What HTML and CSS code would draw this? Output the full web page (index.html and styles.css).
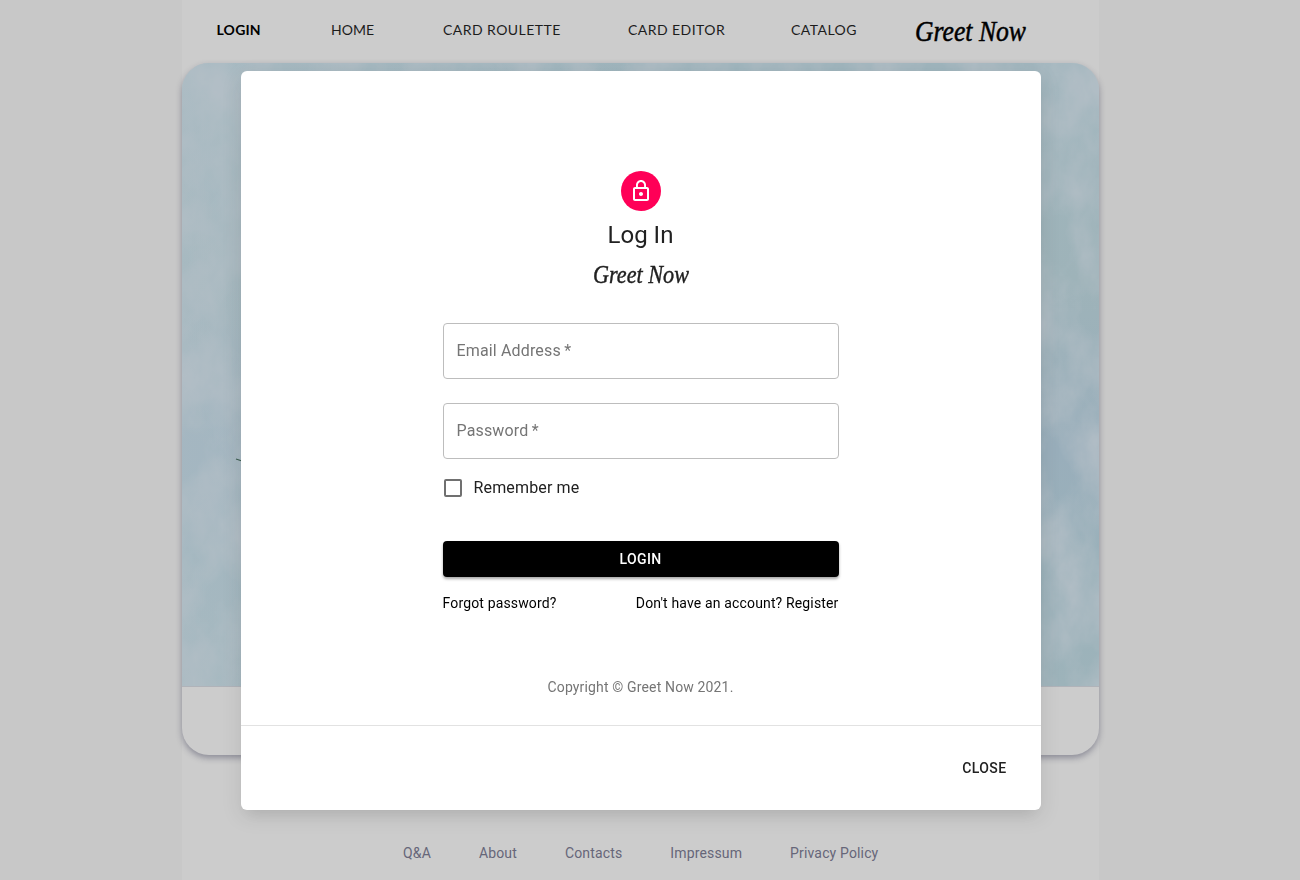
FILE: index.html
```html
<!DOCTYPE html>
<html lang="en">
<head>
<meta charset="utf-8">
<title>Greet Now</title>
<link rel="stylesheet" href="styles.css">
</head>
<body>
<div class="page">
  <nav class="nav">
    <a class="active">LOGIN</a><a class="home">HOME</a><a>CARD ROULETTE</a><a>CARD EDITOR</a><a>CATALOG</a>
    <svg class="brand" viewBox="0 0 120 40" aria-label="Greet Now"><text x="4" y="24" textLength="111" lengthAdjust="spacingAndGlyphs">Greet Now</text></svg>
  </nav>
  <main class="card">
    <div class="picture">
      <svg class="texture" preserveAspectRatio="none">
        <filter id="paper" x="0" y="0" width="100%" height="100%" color-interpolation-filters="sRGB">
          <feTurbulence type="fractalNoise" baseFrequency="0.022 0.014" numOctaves="6" seed="8"/>
          <feColorMatrix values="0 0 0 0 .71  0 0 0 0 .75  0 0 0 0 .78  1.6 0 0 0 -.5"/>
        </filter>
        <rect width="100%" height="100%" filter="url(#paper)"/>
        <path d="M54 396l6 2" stroke="#3b5d50" stroke-width="1.2"/>
      </svg>
    </div>
    <div class="card-actions"></div>
  </main>
  <footer class="footer"><a>Q&amp;A</a><a>About</a><a>Contacts</a><a>Impressum</a><a>Privacy Policy</a></footer>
</div>
<div class="overlay">
  <section class="dialog">
    <div class="content">
      <div class="avatar"><svg width="24" height="24" viewBox="0 0 24 24" fill="#fff"><path d="M12 17c1.1 0 2-.9 2-2s-.9-2-2-2-2 .9-2 2 .9 2 2 2zm6-9h-1V6c0-2.760-2.240-5-5-5S7 3.240 7 6v2H6c-1.100 0-2 .9-2 2v10c0 1.100.9 2 2 2h12c1.100 0 2-.9 2-2V10c0-1.100-.9-2-2-2zM8.900 6c0-1.710 1.390-3.100 3.100-3.100s3.100 1.390 3.100 3.100v2H8.900V6zM18 20H6V10h12v10z"/></svg></div>
      <h1 class="title">Log In</h1>
      <svg class="logo" viewBox="0 0 104 34" aria-label="Greet Now"><text x="4" y="20" textLength="96" lengthAdjust="spacingAndGlyphs">Greet Now</text></svg>
      <form class="form">
        <div class="field"><span>Email Address&thinsp;*</span></div>
        <div class="field"><span>Password&thinsp;*</span></div>
        <label class="remember"><span class="box"></span><span>Remember me</span></label>
        <button class="submit" type="button">LOGIN</button>
        <div class="links"><a>Forgot password?</a><a>Don't have an account? Register</a></div>
      </form>
      <p class="copyright">Copyright © Greet Now 2021.</p>
    </div>
    <div class="actions"><button class="close" type="button">CLOSE</button></div>
  </section>
</div>
</body>
</html>
```
FILE: styles.css
```css
* { box-sizing: border-box; }
body { margin: 0; height: 880px; overflow: hidden; background: #c8c8c8; font-family: Roboto, sans-serif; }
.page { width: 917px; height: 880px; margin-left: 182px; background: #ccc; display: flex; flex-direction: column; }
.nav { height: 63px; padding-left: 34px; display: grid; grid-template-columns: 115px 112px 185px 163px 120px 120px; font: 14px/20px Lato, sans-serif; letter-spacing: .45px; color: #1c1c1c; }
.nav a { padding-top: 20px; white-space: nowrap; }
.nav .active { padding-left: .5px; letter-spacing: .2px; font-weight: 700; color: #000; }
.nav .home { letter-spacing: 0; }
.brand { width: 120px; height: 40px; margin-top: 17px; overflow: visible; font: italic 29px "Liberation Serif", serif; letter-spacing: 0; fill: #000; stroke: #000; stroke-width: .5px; }
.card { height: 692px; border-radius: 27px; overflow: hidden; background: #ccc; box-shadow: 0 3px 6px rgba(30,30,60,.36); }
.picture { height: 624px; border-bottom: 1px solid #b0b3b9; background: linear-gradient(90deg, rgba(176,191,199,.5) 0, rgba(176,191,199,0) 50%), linear-gradient(#9fb5bd, #9eb3b9 35%, #99aebb 62%, #9ab1ba 80%, #9db3ba); }
.texture { display: block; width: 917px; height: 623px; }
.card-actions { height: 68px; }
.footer { margin-top: 88px; padding-left: 221px; display: flex; gap: 48px; font-size: 14px; line-height: 20px; letter-spacing: .15px; color: #666679; }
.overlay { position: fixed; inset: 0; padding: 71px 0 0 241px; }
.dialog { width: 800px; height: 739px; border-radius: 6px; background: #fff; color: #212121; box-shadow: 0 11px 15px -7px rgba(0,0,0,.08), 0 6px 20px 2px rgba(0,0,0,.08); }
.content { height: 655px; padding-top: 100px; border-bottom: 1px solid #e2e2e2; display: flex; flex-direction: column; align-items: center; }
.avatar { width: 40px; height: 40px; border-radius: 50%; background: #ff0057; display: grid; place-items: center; }
.title { margin: 8px 1px 0 0; font-size: 24px; font-weight: 400; line-height: 32px; }
.logo { width: 104px; height: 34px; margin-top: 12px; overflow: visible; font: italic 25px "Liberation Serif", serif; fill: #212121; stroke: #212121; stroke-width: .4px; }
.form { width: 396px; margin-top: 26px; }
.field { height: 56px; margin-bottom: 24px; padding-left: 12.5px; border: 1px solid #bdbdbd; border-radius: 4px; line-height: 54px; font-size: 16px; letter-spacing: .15px; color: #757575; }
.remember { display: flex; align-items: center; gap: 11.5px; height: 42px; padding-left: 1px; font-size: 16px; line-height: 20px; letter-spacing: .15px; }
.box { width: 18px; height: 18px; border: 2px solid #707070; border-radius: 2px; }
.field + .remember { margin-top: -16px; }
.submit { display: block; width: 396px; height: 36px; margin-top: 32px; padding: 0 7px 0 6px; border: 0; border-radius: 4px; background: #000; color: #fff; font: 500 14px/24px Roboto, sans-serif; letter-spacing: .4px; box-shadow: 0 2px 3px rgba(0,0,0,.35); }
.links { display: flex; justify-content: space-between; margin: 16px .5px 0 -.5px; font-size: 14px; line-height: 20px; letter-spacing: .15px; color: #000; }
.copyright { margin: 64px 1px 0 0; font-size: 14px; line-height: 20px; letter-spacing: .15px; color: #757575; }
.actions { height: 84px; padding-right: 26.5px; display: flex; align-items: center; justify-content: flex-end; }
.close { border: 0; padding: 6px 8px; background: none; color: #212121; font: 500 14px/24px Roboto, sans-serif; letter-spacing: .4px; }
```
